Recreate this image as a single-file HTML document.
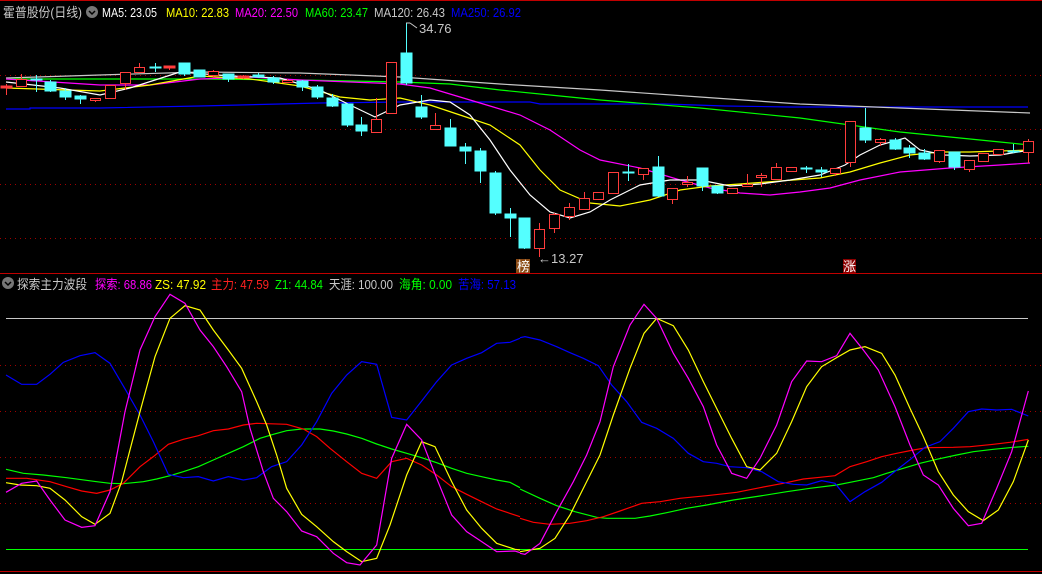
<!DOCTYPE html>
<html><head><meta charset="utf-8">
<style>
html,body{margin:0;padding:0;background:#000;width:1042px;height:574px;overflow:hidden}
svg{display:block}
text{font-family:"Liberation Sans","Noto Sans CJK SC",sans-serif;font-size:13px}
</style></head><body>
<svg width="1042" height="574" viewBox="0 0 1042 574" xmlns="http://www.w3.org/2000/svg">
<rect width="1042" height="574" fill="#000"/>
<g shape-rendering="crispEdges">
<line x1="0" y1="0.5" x2="1042" y2="0.5" stroke="#c00000"/>
<line x1="0" y1="273.5" x2="1042" y2="273.5" stroke="#c00000"/>
<line x1="0" y1="571.5" x2="1042" y2="571.5" stroke="#c00000"/>
<g stroke="#a00000" stroke-dasharray="1,4">
<line x1="0" y1="75.5" x2="1042" y2="75.5"/><line x1="0" y1="129.5" x2="1042" y2="129.5"/>
<line x1="0" y1="184.5" x2="1042" y2="184.5"/><line x1="0" y1="238.5" x2="1042" y2="238.5"/>
<line x1="0" y1="365.5" x2="1042" y2="365.5"/><line x1="0" y1="411.5" x2="1042" y2="411.5"/>
<line x1="0" y1="457.5" x2="1042" y2="457.5"/><line x1="0" y1="503.5" x2="1042" y2="503.5"/>
</g>
<line x1="6" y1="318.5" x2="1028" y2="318.5" stroke="#c8c8c8"/>
<line x1="6" y1="549.5" x2="1028" y2="549.5" stroke="#00ff00"/>
</g>

<!-- header -->
<text x="3" y="17" fill="#c8c8c8" textLength="79" lengthAdjust="spacingAndGlyphs">霍普股份(日线)</text>
<circle cx="92" cy="12" r="6" fill="#777"/><path d="M89 11 l3 3 l3 -3" stroke="#000" stroke-width="1.5" fill="none"/>
<text x="102" y="17" fill="#fff" textLength="55" lengthAdjust="spacingAndGlyphs">MA5: 23.05</text>
<text x="166" y="17" fill="#ffff00" textLength="63" lengthAdjust="spacingAndGlyphs">MA10: 22.83</text>
<text x="235" y="17" fill="#ff00ff" textLength="63" lengthAdjust="spacingAndGlyphs">MA20: 22.50</text>
<text x="305" y="17" fill="#00ff00" textLength="63" lengthAdjust="spacingAndGlyphs">MA60: 23.47</text>
<text x="374" y="17" fill="#c8c8c8" textLength="71" lengthAdjust="spacingAndGlyphs">MA120: 26.43</text>
<text x="451" y="17" fill="#0000ff" textLength="70" lengthAdjust="spacingAndGlyphs">MA250: 26.92</text>

<text x="17" y="289" fill="#c8c8c8" textLength="70" lengthAdjust="spacingAndGlyphs">探索主力波段</text>
<circle cx="8" cy="283" r="6" fill="#777"/><path d="M5 282 l3 3 l3 -3" stroke="#000" stroke-width="1.5" fill="none"/>
<text x="95" y="289" fill="#ff00ff" textLength="57" lengthAdjust="spacingAndGlyphs">探索: 68.86</text>
<text x="155" y="289" fill="#ffff00" textLength="51" lengthAdjust="spacingAndGlyphs">ZS: 47.92</text>
<text x="211" y="289" fill="#ff2020" textLength="58" lengthAdjust="spacingAndGlyphs">主力: 47.59</text>
<text x="275" y="289" fill="#00ff00" textLength="48" lengthAdjust="spacingAndGlyphs">Z1: 44.84</text>
<text x="329" y="289" fill="#c8c8c8" textLength="64" lengthAdjust="spacingAndGlyphs">天涯: 100.00</text>
<text x="399" y="289" fill="#00ff00" textLength="53" lengthAdjust="spacingAndGlyphs">海角: 0.00</text>
<text x="458" y="289" fill="#0000ff" textLength="58" lengthAdjust="spacingAndGlyphs">苦海: 57.13</text>

<!-- MA lines -->
<g fill="none" stroke-width="1.2">
<polyline stroke="#0000ff" points="6,109 30,109 30,108 100,108 200,106 280,104 320,103 400,102 530,102 540,104 665,104 725,106 790,107 1028,107"/>
<polyline stroke="#c8c8c8" points="6,78 100,75 200,72 300,73 400,77 500,84 600,90 700,97 800,104 900,108 1030,113"/>
<polyline stroke="#00ff00" points="6,79 100,79 200,79 300,80 400,82 450,84 500,90 550,95 600,100 700,108 800,118 900,132 1000,142 1030,145"/>
<polyline stroke="#ff00ff" points="6,79 100,85 150,85 200,79 250,77 300,80 350,82 400,84 430,88 460,97 490,106 520,115 550,130 580,150 600,160 640,168 680,180 710,188 740,193 770,195 800,192 830,188 860,180 900,172 950,168 1000,165 1030,163"/>
<polyline stroke="#ffff00" points="6,88 100,91 150,85 200,76 250,79 300,86 340,97 370,100 400,98 430,105 460,115 490,125 520,145 540,170 560,190 590,203 620,206 650,200 680,190 710,186 740,184 780,181 820,178 850,172 880,163 910,155 940,152 970,152 1000,151 1030,150"/>
<polyline stroke="#ffffff" points="6,82 60,88 100,95 130,88 180,72 230,76 280,78 320,90 350,105 375,117 400,105 430,100 450,102 470,115 490,140 510,170 530,195 550,212 570,218 590,212 610,200 640,185 670,180 700,180 730,186 760,184 790,180 820,175 845,165 860,155 880,145 905,138 920,150 945,155 970,156 1000,155 1030,150"/>
</g>

<!-- candles -->
<g shape-rendering="crispEdges" stroke-width="1">
<g stroke="#ff3c3c">
<line x1="6.5" y1="84" x2="6.5" y2="95"/><rect x="1" y="86" width="11" height="2" fill="#ff3c3c"/>
<line x1="21.5" y1="74" x2="21.5" y2="86"/><rect x="16.5" y="79.5" width="10" height="7" fill="#000"/>
<line x1="95.5" y1="98" x2="95.5" y2="102"/><rect x="90.5" y="98.5" width="10" height="2" fill="#000"/>
<rect x="105.5" y="85.5" width="10" height="13" fill="#000"/>
<rect x="120.5" y="72.5" width="10" height="11" fill="#000"/><line x1="125.5" y1="83" x2="125.5" y2="90"/>
<line x1="139.5" y1="63" x2="139.5" y2="73"/><rect x="134.5" y="67.5" width="10" height="5" fill="#000"/>
<line x1="169.5" y1="66" x2="169.5" y2="70"/><rect x="164" y="66" width="11" height="2" fill="#ff3c3c"/>
<line x1="213.5" y1="70" x2="213.5" y2="78"/><rect x="208.5" y="71.5" width="10" height="4" fill="#000"/>
<line x1="243.5" y1="75" x2="243.5" y2="79"/><rect x="238" y="76" width="11" height="2" fill="#ff3c3c"/>
<line x1="287.5" y1="79" x2="287.5" y2="83"/><rect x="282.5" y="80.5" width="10" height="2" fill="#000"/>
<line x1="376.5" y1="98" x2="376.5" y2="132"/><rect x="371.5" y="119.5" width="10" height="13" fill="#000"/>
<rect x="386.5" y="62.5" width="10" height="51" fill="#000"/>
<line x1="435.5" y1="113" x2="435.5" y2="130"/><rect x="430.5" y="125.5" width="10" height="4" fill="#000"/>
<line x1="539.5" y1="223" x2="539.5" y2="257"/><rect x="534.5" y="229.5" width="10" height="19" fill="#000"/>
<line x1="554.5" y1="213" x2="554.5" y2="233"/><rect x="549.5" y="214.5" width="10" height="14" fill="#000"/>
<line x1="569.5" y1="203" x2="569.5" y2="220"/><rect x="564.5" y="207.5" width="10" height="9" fill="#000"/>
<line x1="584.5" y1="192" x2="584.5" y2="209"/><rect x="579.5" y="198.5" width="10" height="11" fill="#000"/>
<rect x="593.5" y="192.5" width="10" height="7" fill="#000"/>
<rect x="608.5" y="172.5" width="10" height="21" fill="#000"/>
<line x1="643.5" y1="168" x2="643.5" y2="180"/><rect x="638.5" y="168.5" width="10" height="6" fill="#000"/>
<line x1="672.5" y1="188" x2="672.5" y2="204"/><rect x="667.5" y="188.5" width="10" height="11" fill="#000"/>
<line x1="687.5" y1="176" x2="687.5" y2="187"/><rect x="682.5" y="182.5" width="10" height="2" fill="#000"/>
<rect x="727.5" y="188.5" width="10" height="5" fill="#000"/>
<line x1="747.5" y1="174" x2="747.5" y2="186"/><rect x="742.5" y="184.5" width="10" height="2" fill="#000"/>
<line x1="761.5" y1="173" x2="761.5" y2="187"/><rect x="756.5" y="175.5" width="10" height="2" fill="#000"/>
<line x1="776.5" y1="163" x2="776.5" y2="179"/><rect x="771.5" y="167.5" width="10" height="12" fill="#000"/>
<rect x="786.5" y="167.5" width="10" height="4" fill="#000"/>
<line x1="835.5" y1="168" x2="835.5" y2="176"/><rect x="830.5" y="168.5" width="10" height="5" fill="#000"/>
<line x1="850.5" y1="121" x2="850.5" y2="167"/><rect x="845.5" y="121.5" width="10" height="41" fill="#000"/>
<line x1="880.5" y1="138" x2="880.5" y2="146"/><rect x="875.5" y="139.5" width="10" height="3" fill="#000"/>
<line x1="939.5" y1="150" x2="939.5" y2="163"/><rect x="934.5" y="150.5" width="10" height="11" fill="#000"/>
<line x1="969.5" y1="160" x2="969.5" y2="172"/><rect x="964.5" y="160.5" width="10" height="9" fill="#000"/>
<rect x="978.5" y="153.5" width="10" height="8" fill="#000"/>
<rect x="993.5" y="149.5" width="10" height="5" fill="#000"/>
<line x1="1028.5" y1="139" x2="1028.5" y2="163"/><rect x="1023.5" y="141.5" width="10" height="11" fill="#000"/>
</g>
<g stroke="#54ffff" fill="#54ffff">
<line x1="36.5" y1="75" x2="36.5" y2="92"/><rect x="31" y="79" width="11" height="1"/>
<line x1="50.5" y1="80" x2="50.5" y2="92"/><rect x="45" y="82" width="11" height="9"/>
<line x1="65.5" y1="88" x2="65.5" y2="100"/><rect x="60" y="91" width="11" height="6"/>
<line x1="80.5" y1="95" x2="80.5" y2="104"/><rect x="75" y="96" width="11" height="3"/>
<line x1="155.5" y1="63" x2="155.5" y2="72"/><rect x="150" y="67" width="11" height="1"/>
<rect x="179" y="63" width="11" height="11"/><line x1="184.5" y1="74" x2="184.5" y2="76"/>
<rect x="194" y="70" width="11" height="7"/>
<line x1="228.5" y1="74" x2="228.5" y2="82"/><rect x="223" y="74" width="11" height="5"/>
<line x1="258.5" y1="73" x2="258.5" y2="78"/><rect x="253" y="75" width="11" height="2"/>
<line x1="273.5" y1="76" x2="273.5" y2="84"/><rect x="268" y="78" width="11" height="4"/>
<line x1="302.5" y1="80" x2="302.5" y2="91"/><rect x="297" y="81" width="11" height="6"/>
<line x1="317.5" y1="85" x2="317.5" y2="99"/><rect x="312" y="87" width="11" height="10"/>
<line x1="332.5" y1="94" x2="332.5" y2="107"/><rect x="327" y="98" width="11" height="8"/>
<line x1="347.5" y1="104" x2="347.5" y2="127"/><rect x="342" y="104" width="11" height="21"/>
<line x1="361.5" y1="117" x2="361.5" y2="136"/><rect x="356" y="125" width="11" height="6"/>
<line x1="406.5" y1="23" x2="406.5" y2="85"/><rect x="401" y="53" width="11" height="30"/>
<line x1="421.5" y1="95" x2="421.5" y2="119"/><rect x="416" y="107" width="11" height="10"/>
<line x1="450.5" y1="119" x2="450.5" y2="146"/><rect x="445" y="128" width="11" height="18"/>
<line x1="465.5" y1="143" x2="465.5" y2="164"/><rect x="460" y="147" width="11" height="4"/>
<line x1="480.5" y1="148" x2="480.5" y2="183"/><rect x="475" y="151" width="11" height="20"/>
<line x1="495.5" y1="171" x2="495.5" y2="215"/><rect x="490" y="173" width="11" height="40"/>
<line x1="510.5" y1="208" x2="510.5" y2="237"/><rect x="505" y="214" width="11" height="4"/>
<line x1="524.5" y1="218" x2="524.5" y2="249"/><rect x="519" y="218" width="11" height="30"/>
<line x1="628.5" y1="164" x2="628.5" y2="181"/><rect x="623" y="172" width="11" height="1"/>
<line x1="658.5" y1="156" x2="658.5" y2="197"/><rect x="653" y="167" width="11" height="29"/>
<line x1="702.5" y1="168" x2="702.5" y2="191"/><rect x="697" y="168" width="11" height="18"/>
<line x1="717.5" y1="186" x2="717.5" y2="194"/><rect x="712" y="186" width="11" height="7"/>
<line x1="806.5" y1="166" x2="806.5" y2="173"/><rect x="801" y="168" width="11" height="1"/>
<line x1="821.5" y1="167" x2="821.5" y2="177"/><rect x="816" y="170" width="11" height="2"/>
<line x1="865.5" y1="108" x2="865.5" y2="143"/><rect x="860" y="128" width="11" height="12"/>
<line x1="895.5" y1="138" x2="895.5" y2="150"/><rect x="890" y="140" width="11" height="9"/>
<line x1="909.5" y1="145" x2="909.5" y2="158"/><rect x="904" y="148" width="11" height="5"/>
<line x1="924.5" y1="149" x2="924.5" y2="160"/><rect x="919" y="153" width="11" height="6"/>
<line x1="954.5" y1="152" x2="954.5" y2="170"/><rect x="949" y="152" width="11" height="15"/>
<line x1="1013.5" y1="144" x2="1013.5" y2="153"/><rect x="1008" y="151" width="11" height="1"/>
</g>
</g>

<!-- labels -->
<path d="M406 23 H410 M410 23 L417 28" stroke="#c8c8c8" fill="none"/>
<text x="419" y="33" fill="#c8c8c8" font-size="12">34.76</text>
<text x="538" y="263" fill="#c8c8c8" font-size="12">←13.27</text>
<rect x="516" y="259" width="14" height="14" fill="#8b4a14"/>
<text x="517" y="271" fill="#fff" font-size="12">榜</text>
<rect x="843" y="259" width="13" height="14" fill="#8b0000"/>
<text x="843" y="271" fill="#fff" font-size="12">涨</text>

<!-- sub chart lines -->
<g fill="none" stroke-width="3.6">
<g transform="translate(0,285) scale(0.33333)">
<polyline stroke="#00ff00" points="18,553 70,565 130,570 200,578 290,590 330,595 370,596 430,590 470,582 510,572 550,560 595,545 640,525 685,505 730,485 780,460 820,448 860,437 905,432 960,432 1000,438 1040,447 1085,460 1130,477 1175,492 1220,505 1265,518 1310,533 1355,550 1400,565 1445,575 1490,585 1530,592 1560,608"/>
<polyline stroke="#ff0000" points="18,580 80,580 150,590 200,605 245,618 290,625 330,615 370,595 420,545 460,515 505,478 550,463 595,452 640,437 685,432 730,420 770,415 860,418 910,432 950,455 990,490 1040,530 1085,565 1130,580 1175,530 1220,520 1265,540 1310,570 1355,605 1400,628 1445,650 1490,672 1560,695"/>
<polyline stroke="#0000ff" points="18,270 65,298 110,298 150,268 190,232 240,212 285,203 330,235 380,320 420,390 460,470 505,568 550,578 595,575 640,588 685,575 730,585 770,578 815,545 860,530 905,480 950,410 995,325 1040,270 1085,230 1130,238 1175,397 1220,405 1265,348 1310,290 1355,240 1400,220 1445,203 1490,175 1530,172 1560,160"/>
<polyline stroke="#ffff00" points="18,593 60,600 110,602 150,610 195,645 245,695 285,718 330,685 365,590 420,380 465,215 510,100 555,62 600,75 640,135 685,195 725,250 770,350 800,420 830,510 860,610 905,688 950,725 1000,770 1040,800 1085,830 1130,820 1170,720 1220,570 1265,470 1305,485 1355,590 1400,675 1445,730 1490,775 1545,793 1560,795"/>
<polyline stroke="#ff00ff" points="18,622 65,595 110,588 150,645 195,705 245,727 285,722 330,620 375,380 420,195 465,95 510,28 555,55 600,135 640,185 680,245 725,320 750,430 790,560 820,640 860,680 905,738 950,755 1000,805 1040,833 1080,840 1130,780 1175,520 1220,418 1265,465 1310,580 1355,690 1400,740 1445,770 1490,800 1545,798 1560,803"/>
</g>
<g transform="translate(520,285) scale(0.33333)">
<polyline stroke="#00ff00" points="0,612 60,640 110,662 165,680 230,697 260,700 345,700 390,693 440,683 500,670 560,660 640,645 720,633 800,620 870,610 950,600 1000,590 1060,578 1100,565 1150,550 1200,535 1250,523 1310,510 1360,500 1420,493 1480,487 1525,484"/>
<polyline stroke="#ff0000" points="0,700 40,712 90,718 150,715 200,707 250,695 300,678 365,655 420,650 480,640 560,632 650,622 720,608 790,595 850,582 900,577 945,572 990,545 1040,530 1085,515 1130,505 1180,495 1220,488 1300,487 1350,485 1420,478 1470,472 1525,463"/>
<polyline stroke="#0000ff" points="0,158 15,155 60,165 110,185 150,203 190,220 235,242 275,300 320,350 365,412 410,430 460,460 505,505 550,530 590,535 630,545 680,548 725,560 775,590 820,598 860,600 905,587 945,595 990,650 1035,620 1085,592 1130,555 1175,520 1215,487 1260,470 1300,430 1345,380 1385,372 1430,375 1475,373 1525,393"/>
<polyline stroke="#ffff00" points="0,800 60,790 105,760 150,690 195,600 240,510 280,390 330,250 372,145 410,100 460,122 505,195 550,290 590,370 635,460 680,545 720,555 770,505 815,410 860,305 905,245 950,218 990,195 1035,185 1085,205 1125,270 1170,370 1210,455 1255,560 1300,630 1345,680 1390,707 1435,675 1480,590 1525,465"/>
<polyline stroke="#ff00ff" points="0,805 15,808 60,775 110,680 160,590 200,510 240,410 280,245 330,120 372,58 410,100 460,205 505,280 550,365 590,480 635,565 680,580 720,520 770,420 815,290 860,228 905,230 950,212 990,145 1030,195 1075,255 1125,365 1170,480 1210,570 1255,600 1300,670 1345,722 1385,715 1430,610 1475,500 1525,318"/>
</g>
</g>
</svg>
</body></html>
